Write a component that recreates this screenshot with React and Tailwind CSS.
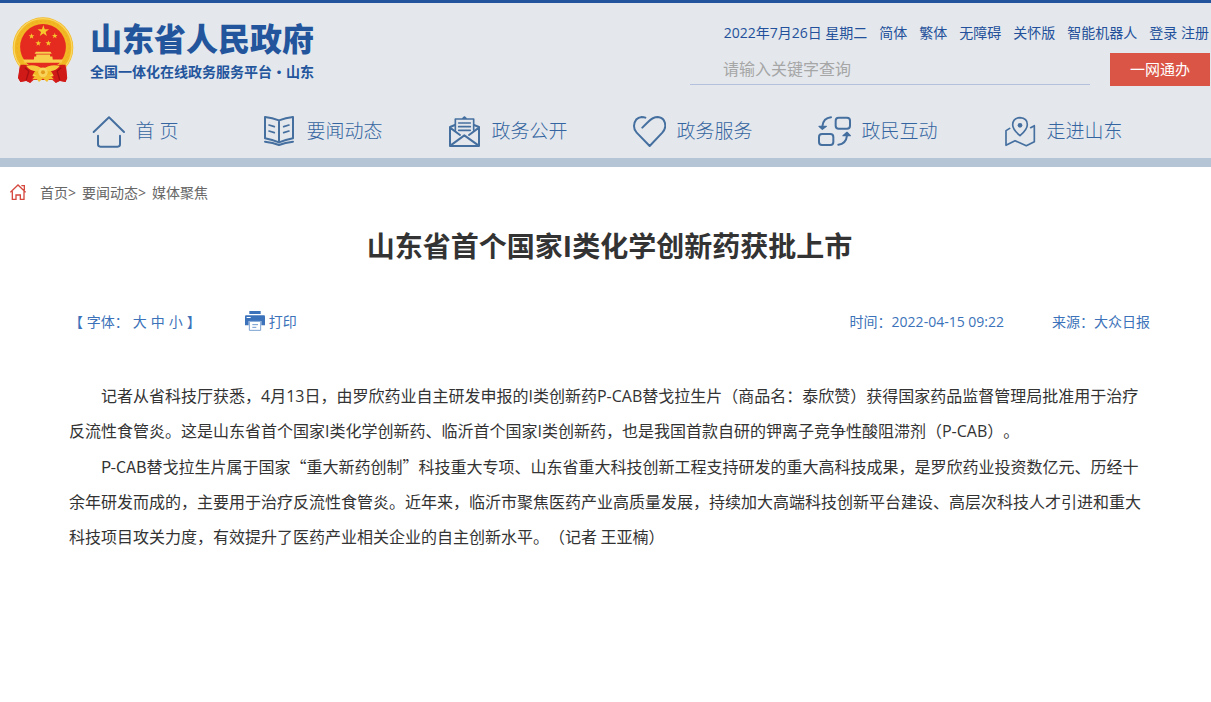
import React from "react";

const FONT = "font-['Open_Sans','Noto_Sans_CJK_SC',sans-serif]";

function Star({ x, y, r }) {
  const pts = [];
  for (let i = 0; i < 10; i++) {
    const a = -Math.PI / 2 + (i * Math.PI) / 5;
    const d = i % 2 ? r * 0.4 : r;
    pts.push(`${(x + d * Math.cos(a)).toFixed(1)},${(y + d * Math.sin(a)).toFixed(1)}`);
  }
  return <polygon points={pts.join(" ")} fill="#f6c62d" />;
}

function Emblem() {
  return (
    <svg className="h-[66px] w-[62px] shrink-0" viewBox="21 21 182 196" aria-hidden="true">
      <path d="M44 158L60 172H164L180 158L183 202L179 214L162 211L150 217L140 208H84L74 217L62 211L45 214L38 202Z" fill="#d81f1c" />
      <circle cx="112" cy="112" r="90" fill="#f2b824" />
      <circle cx="112" cy="112" r="86" fill="none" stroke="#f9d660" strokeWidth="4" />
      <circle cx="112" cy="111" r="77" fill="none" stroke="#e8a820" strokeWidth="2" strokeDasharray="7 6" />
      <circle cx="112" cy="110" r="68" fill="#e52a20" />
      <Star x={113} y={63} r={18} />
      <Star x={78} y={78} r={9} />
      <Star x={147} y={77} r={9} />
      <Star x={98} y={99} r={9} />
      <Star x={128} y={99} r={9} />
      <path d="M91 124H134L138 130H87ZM92 132H133V138H92ZM86 138H140L141 147H171L167 157H57L53 147H85Z" fill="#f8cf4c" />
      <path d="M45 163Q78 160 94 175Q80 190 74 216L62 210L45 214L38 202ZM179 163Q146 160 130 175Q144 190 150 216L162 210L179 214L184 202Z" fill="#d01a18" />
      <path d="M58 172L70 182L62 208M166 172L154 182L162 208" fill="none" stroke="#a80f12" strokeWidth="4" />
      <path d="M62 166Q92 160 112 176Q132 160 162 166Q150 184 128 182L112 176L96 182Q74 184 62 166Z" fill="#f7c93d" />
      <circle cx="112" cy="185" r="14" fill="#f9d45a" />
      <circle cx="112" cy="185" r="6" fill="#e39b1d" />
      <path d="M94 190L80 206L94 206L100 214L112 204L124 214L130 206L144 206L130 190L112 202Z" fill="#f4bd2c" />
    </svg>
  );
}

function NavIcon({ x, children }) {
  return (
    <svg
      className="size-[34px] shrink-0"
      viewBox={`${x} 30 102 102`}
      fill="none"
      stroke="#456f9f"
      strokeWidth="6"
      strokeLinecap="round"
      strokeLinejoin="round"
      aria-hidden="true"
    >
      {children}
    </svg>
  );
}

const NAV = [
  {
    label: "首 页",
    icon: (
      <NavIcon x={33}>
        <path d="M38 81L84 37L129 81M51 92V118Q51 125 58 125H110Q117 125 117 118V92" />
      </NavIcon>
    ),
  },
  {
    label: "要闻动态",
    icon: (
      <NavIcon x={546}>
        <path d="M597 46Q577 39 555 36V100Q577 104 597 112Q617 104 639 100V36Q617 39 597 46V112M555 110Q579 112 597 120Q615 112 639 110" />
        <path d="M567 60L583 65M567 78L583 83M611 65L627 60M611 83L627 78" strokeWidth="5" />
      </NavIcon>
    ),
  },
  {
    label: "政务公开",
    icon: (
      <NavIcon x={51}>
        <path d="M60 66V123H147V66L132 60M60 66L75 60M60 68L90 90M147 68L117 90M62 121L103 91L145 121" />
        <path d="M76 76V42H131V76M99 40L103 36L108 40" strokeWidth="5" />
        <path d="M86 54H121M86 65H121M86 76H121" strokeWidth="5" />
      </NavIcon>
    ),
  },
  {
    label: "政务服务",
    icon: (
      <NavIcon x={606}>
        <path d="M637 68L654 51Q668 36 684 36Q705 38 706 63Q705 74 697 83L659 123L620 83Q612 75 612 63Q614 38 635 36Q641 36 646 38" />
      </NavIcon>
    ),
  },
  {
    label: "政民互动",
    icon: (
      <NavIcon x={51}>
        <rect x="107" y="38" width="43" height="33" rx="9" />
        <rect x="57" y="87" width="43" height="33" rx="9" />
        <path d="M93 37Q70 39 67 64M115 119Q138 117 141 92" />
        <path d="M57 64L67 73L79 64ZM129 92L141 82L151 92Z" fill="#456f9f" strokeWidth="4" />
      </NavIcon>
    ),
  },
  {
    label: "走进山东",
    icon: (
      <NavIcon x={606}>
        <g strokeWidth="5">
          <path d="M660 92Q638 73 638 59Q639 39 660 38Q682 39 682 59Q682 73 660 92Z" />
          <path d="M629 70L618 77V121L645 107L679 122L703 110V62L692 68" />
        </g>
        <circle cx="660" cy="61" r="7" fill="#456f9f" stroke="none" />
      </NavIcon>
    ),
  },
];

function Header() {
  return (
    <header className="border-t-3 border-b-9 border-t-[#21549c] border-b-[#b5c5d6] bg-[#e4e8ed]">
      <div className="flex h-[102px] justify-between pl-3">
        <a href="#" className="flex items-start gap-4 pt-[14px] text-[#23559d]">
          <Emblem />
          <span className="flex flex-col font-['Noto_Sans_CJK_SC',sans-serif]">
            <span className="text-[32px] leading-10 font-black">山东省人民政府</span>
            <span className="mt-1 text-[14px] leading-5 font-bold">全国一体化在线政务服务平台·山东</span>
          </span>
        </a>
        <div className="flex w-[521px] flex-col pt-5 pr-px">
          <div className="flex justify-end gap-3 pr-px text-[14px] leading-5 whitespace-nowrap text-[#23509a]">
            <span>2022年7月26日 星期二</span>
            <a href="#">简体</a>
            <a href="#">繁体</a>
            <a href="#">无障碍</a>
            <a href="#">关怀版</a>
            <a href="#">智能机器人</a>
            <span>
              <a href="#">登录</a> <a href="#">注册</a>
            </span>
          </div>
          <form className="mt-[10px] flex items-start gap-5" onSubmit={(e) => e.preventDefault()}>
            <input
              type="text"
              aria-label="请输入关键字查询"
              placeholder="请输入关键字查询"
              className="h-8 min-w-0 flex-1 border-b border-[#b3c1dc] bg-transparent pr-3 pl-[33px] text-[16px] outline-none placeholder:text-[#a6a6a6]"
            />
            <button type="button" className="h-[33px] w-[100px] bg-[#da5546] text-[15px] text-white">
              一网通办
            </button>
          </form>
        </div>
      </div>
      <nav className="grid h-[53px] grid-cols-6 pr-14 pl-[45px]">
        {NAV.map((n) => (
          <a
            key={n.label}
            href="#"
            className="flex items-center justify-center gap-[10px] text-[19px] font-light whitespace-pre text-[#3565a0]"
          >
            {n.icon}
            <span className="min-w-12">{n.label}</span>
          </a>
        ))}
      </nav>
    </header>
  );
}

function Breadcrumb() {
  return (
    <div className="flex h-[50px] items-center gap-[14px] pl-[10px] text-[14px] text-[#666]">
      <svg className="size-4" viewBox="30 46 48 48" fill="none" stroke="#d5493f" strokeWidth="4" aria-hidden="true">
        <path d="M31 71L54 49L77 71M64 51H73V65M37 68V92H48V79H61V92H72V68" />
      </svg>
      <div className="flex gap-[6px]">
        <span>
          <a href="#">首页</a>&gt;
        </span>
        <span>
          <a href="#">要闻动态</a>&gt;
        </span>
        <a href="#">媒体聚焦</a>
      </div>
    </div>
  );
}

function PrintIcon() {
  return (
    <svg className="size-5" viewBox="735 429 60 60" aria-hidden="true">
      <path d="M748 429H782V438H748Z" fill="#3b72b9" />
      <path d="M738 442H792Q795 442 795 446V472H784V459H746V472H735V446Q735 442 738 442Z" fill="#3b72b9" />
      <path d="M740 447H752V450H740Z" fill="#fff" />
      <path d="M748 460H782V487H748Z" fill="#fff" stroke="#7ba1d2" strokeWidth="3" />
      <path d="M757 470H774M757 478H769" stroke="#6f99ce" strokeWidth="3" />
    </svg>
  );
}

export default function App() {
  return (
    <div className={`${FONT} min-h-screen bg-white [text-spacing-trim:space-all]`} lang="zh-CN">
      <Header />
      <Breadcrumb />
      <main className="pr-[61px] pl-[69px]">
        <h1 className="pt-[9px] text-center text-[28px] leading-10 font-bold text-[#333]">
          山东省首个国家I类化学创新药获批上市
        </h1>
        <div className="mt-[45px] flex h-5 items-center justify-between text-[14px] text-[#3b72b9]">
          <div className="flex items-center">
            <div className="flex items-center gap-1">
              <span>【 字体：</span>
              <button type="button">大</button>
              <button type="button">中</button>
              <button type="button">小</button>
              <span>】</span>
            </div>
            <button type="button" className="ml-11 flex items-center gap-1">
              <PrintIcon />
              打印
            </button>
          </div>
          <div className="flex gap-12">
            <span>时间：2022-04-15 09:22</span>
            <span>来源：大众日报</span>
          </div>
        </div>
        <article className="mt-12 pr-1 text-[16px] leading-[35px] text-[#333]">
          <p className="indent-8">
            记者从省科技厅获悉，4月13日，由罗欣药业自主研发申报的I类创新药P-CAB替戈拉生片（商品名：泰欣赞）获得国家药品监督管理局批准用于治疗反流性食管炎。这是山东省首个国家I类化学创新药、临沂首个国家I类创新药，也是我国首款自研的钾离子竞争性酸阻滞剂（P-CAB）。
          </p>
          <p className="indent-8 font-['Noto_Sans_CJK_SC',sans-serif]">
            P-CAB替戈拉生片属于国家“重大新药创制”科技重大专项、山东省重大科技创新工程支持研发的重大高科技成果，是罗欣药业投资数亿元、历经十余年研发而成的，主要用于治疗反流性食管炎。近年来，临沂市聚焦医药产业高质量发展，持续加大高端科技创新平台建设、高层次科技人才引进和重大科技项目攻关力度，有效提升了医药产业相关企业的自主创新水平。（记者 王亚楠）
          </p>
        </article>
      </main>
    </div>
  );
}
